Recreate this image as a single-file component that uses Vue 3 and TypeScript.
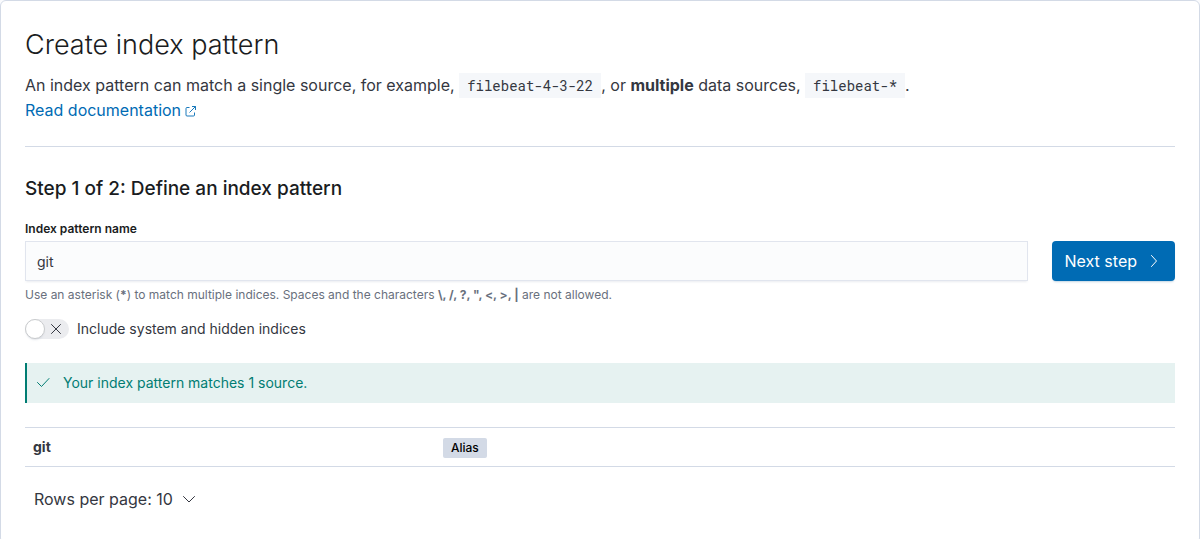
<script setup lang="ts">
import { ref } from 'vue'

interface Source {
  name: string
  kind: string
}

const pattern = ref('git')
const includeHidden = ref(false)
const rowsPerPage = ref(10)
const sources = ref<Source[]>([{ name: 'git', kind: 'Alias' }])
</script>

<template>
  <main class="panel">
    <header class="intro">
      <h1 class="title">Create index pattern</h1>
      <p class="description">
        An index pattern can match a single source, for example, <code class="code">filebeat-4-3-22</code>, or
        <strong>multiple</strong> data sources, <code class="code">filebeat-*</code>.<br />
        <a class="link" href="#documentation">Read documentation<svg class="link-icon" width="12" height="12" viewBox="0 0 12 12" fill="none" stroke="currentColor" stroke-width="0.9" aria-hidden="true"><path d="M4.5 2.5H2Q1 2.5 1 3.5V10Q1 11 2 11H8.5Q9.5 11 9.5 10V7.5M7 1.5H10.5V5M10.5 1.5L4.5 7.5" /></svg></a>
      </p>
    </header>

    <hr class="rule" />

    <h2 class="step-title">Step 1 of 2: Define an index pattern</h2>
    <form class="form" @submit.prevent>
      <div class="field">
        <label class="label" for="pattern">Index pattern name</label>
        <input id="pattern" v-model="pattern" class="input" type="text" aria-describedby="pattern-help" />
        <p id="pattern-help" class="help">
          Use an asterisk (<strong>*</strong>) to match multiple indices. Spaces and the characters
          <strong>\, /, ?, ", &lt;, &gt;, |</strong> are not allowed.
        </p>
      </div>
      <button class="next" type="submit">
        <span>Next step</span>
        <svg width="16" height="16" viewBox="0 0 16 16" fill="none" stroke="currentColor" stroke-linecap="round" stroke-linejoin="round" aria-hidden="true"><path d="M5.5 2.5L10.5 8L5.5 13.5" /></svg>
      </button>
    </form>

    <label class="switch">
      <input v-model="includeHidden" class="switch-input" type="checkbox" role="switch" />
      <span class="track" aria-hidden="true">
        <span class="thumb"></span>
        <svg class="track-icon" width="12" height="12" viewBox="0 0 12 12" fill="none" stroke="currentColor" stroke-linecap="round"><path v-if="includeHidden" d="M1.5 6.5L4.5 9.5L10.5 3" /><path v-else d="M1.5 1.5L10.5 10.5M10.5 1.5L1.5 10.5" /></svg>
      </span>
      <span>Include system and hidden indices</span>
    </label>

    <div class="callout" role="status">
      <svg width="16" height="16" viewBox="0 0 16 16" fill="none" stroke="currentColor" stroke-linecap="round" stroke-linejoin="round" aria-hidden="true"><path d="M2.5 7.5L6.5 11.5L14 3.5" /></svg>
      <span>Your index pattern matches 1 source.</span>
    </div>

    <table class="sources" aria-label="Matching sources">
      <tbody>
        <tr v-for="source in sources" :key="source.name">
          <th class="source-name" scope="row">{{ source.name }}</th>
          <td><span class="badge">{{ source.kind }}</span></td>
        </tr>
      </tbody>
    </table>

    <button class="rows" type="button" aria-haspopup="true">
      <span>Rows per page: {{ rowsPerPage }}</span>
      <svg width="16" height="16" viewBox="0 0 16 16" fill="none" stroke="currentColor" stroke-linecap="round" stroke-linejoin="round" aria-hidden="true"><path d="M2.5 5.5L8 11L13.5 5.5" /></svg>
    </button>
  </main>
</template>

<style>
html {
  background: #fafbfd;
}
</style>

<style scoped>
.panel {
  box-sizing: border-box;
  padding: 24px;
  border: 1px solid #d3dae6;
  border-radius: 6px;
  background: #fff;
  color: #343741;
  font-family: Inter, "Liberation Sans", sans-serif;
  font-size: 14px;
  line-height: 20px;
}

.title {
  margin: 0 0 8px;
  color: #1a1c21;
  font-size: 27px;
  font-weight: 300;
  line-height: 40px;
}

.description {
  margin: 0;
  font-size: 16px;
  line-height: 25px;
}

strong {
  font-weight: 700;
}

.code {
  padding: 3px 8px;
  background: #f5f7fa;
  font-family: "Roboto Mono", "DejaVu Sans Mono", monospace;
  font-size: 14px;
}

.link {
  color: #006bb4;
  text-decoration: none;
}

.link-icon {
  margin-left: 4px;
  vertical-align: -1px;
}

.rule {
  height: 1px;
  margin: 23px 0 24px;
  border: 0;
  background: #d3dae6;
}

.step-title {
  margin: 0 0 15px;
  color: #1a1c21;
  font-size: 19px;
  font-weight: 500;
  line-height: 35px;
}

.form {
  display: flex;
  align-items: flex-start;
  gap: 24px;
}

.field {
  flex: 1;
}

.label {
  display: block;
  margin-bottom: 4px;
  color: #1a1c21;
  font-size: 12px;
  font-weight: 600;
  line-height: 16px;
}

.input {
  box-sizing: border-box;
  display: block;
  width: 100%;
  height: 40px;
  padding: 0 11px;
  border: 1px solid #e1e5ee;
  border-radius: 0;
  background: #fbfcfd;
  box-shadow: 0 2px 2px -1px #98a2b333;
  color: #343741;
  font: inherit;
}

.help {
  margin: 4px 0 0;
  color: #69707d;
  font-size: 12px;
  line-height: 20px;
}

.next {
  display: flex;
  align-items: center;
  gap: 9px;
  height: 40px;
  margin: 20px 0 0;
  padding: 0 13px;
  border: 0;
  border-radius: 4px;
  background: #006bb4;
  box-shadow: 0 2px 2px -1px #366fa04d;
  color: #fff;
  font: inherit;
  font-size: 16px;
}

.switch {
  position: relative;
  display: flex;
  align-items: center;
  gap: 8px;
  width: fit-content;
  margin-top: 14px;
}

.switch-input {
  position: absolute;
  width: 44px;
  height: 20px;
  margin: 0;
  opacity: 0;
}

.track {
  box-sizing: border-box;
  display: flex;
  align-items: center;
  justify-content: space-between;
  width: 44px;
  height: 20px;
  padding-right: 7px;
  border-radius: 10px;
  background: #ebecef;
}

.thumb {
  box-sizing: border-box;
  width: 20px;
  height: 20px;
  border: 1px solid #c9cbcd;
  border-radius: 50%;
  background: #fff;
  box-shadow: 0 2px 2px -1px #98a2b34d;
}

.callout {
  display: flex;
  align-items: center;
  gap: 12px;
  margin: 24px 0;
  padding: 10px 8px;
  border-left: 2px solid #017d73;
  background: #e6f2f1;
  color: #017d73;
}

.sources {
  width: 100%;
  border-collapse: collapse;
  table-layout: fixed;
}

.sources th,
.sources td {
  height: 38px;
  padding: 0 8px;
  border-top: 1px solid #d3dae6;
  border-bottom: 1px solid #d3dae6;
  text-align: left;
}

.sources .source-name {
  width: 394px;
  font-weight: 700;
}

.badge {
  display: inline-block;
  padding: 0 8px;
  border-radius: 2px;
  background: #d3dae6;
  color: #000;
  font-size: 12px;
  font-weight: 500;
}

.rows {
  display: flex;
  align-items: center;
  gap: 8px;
  height: 40px;
  margin: 12px 0 0;
  padding: 0 9px;
  border: 0;
  background: none;
  color: #343741;
  font: inherit;
  font-size: 16px;
}
</style>
